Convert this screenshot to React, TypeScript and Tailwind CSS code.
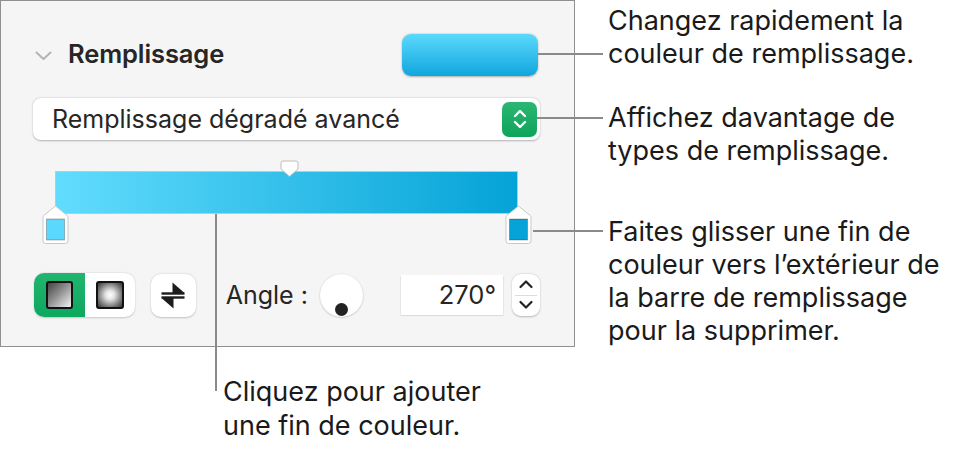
import React from "react";

const font = { fontFamily: "Inter, 'Liberation Sans', sans-serif" };

function ChevronDownSmall() {
  return (
    <svg width="17" height="10" viewBox="0 0 17 10" fill="none">
      <path d="M1.5 1.5 L8.5 8 L15.5 1.5" stroke="#b4b4b4" strokeWidth="2" strokeLinecap="round" strokeLinejoin="round" />
    </svg>
  );
}

function UpDownWhite() {
  return (
    <svg width="16" height="24" viewBox="0 0 16 24" fill="none">
      <path d="M3 9 L8 4 L13 9" stroke="white" strokeWidth="2.4" strokeLinecap="round" strokeLinejoin="round" />
      <path d="M3 15 L8 20 L13 15" stroke="white" strokeWidth="2.4" strokeLinecap="round" strokeLinejoin="round" />
    </svg>
  );
}

function SwapIcon() {
  return (
    <svg width="24" height="27" viewBox="0 0 24 27" fill="#1c1c1c">
      <path d="M11.5 0.5 L23.5 11 L11.5 11 Z" />
      <rect x="0.5" y="10.3" width="23" height="2.4" />
      <rect x="0.5" y="14.3" width="23" height="2.4" />
      <path d="M12.5 26.5 L0.5 16 L12.5 16 Z" />
    </svg>
  );
}

function StopMarker({ color }: { color: string }) {
  return (
    <svg width="27" height="40" viewBox="0 0 27 40">
      <path
        d="M13.5 1 L25.2 10.5 Q26 11.2 26 12.5 V36 Q26 38.5 23.5 38.5 H3.5 Q1 38.5 1 36 V12.5 Q1 11.2 1.8 10.5 Z"
        fill="white"
        stroke="#c9c9c9"
        strokeWidth="1"
      />
      <rect x="4.5" y="14" width="18" height="21" fill={color} stroke="rgba(0,0,0,0.25)" strokeWidth="1" />
    </svg>
  );
}

function MidHandle() {
  return (
    <svg width="19" height="18" viewBox="0 0 19 18">
      <path d="M1 3 Q1 1 3 1 H16 Q18 1 18 3 V9 L9.5 16.5 L1 9 Z" fill="white" stroke="#bdbdbd" strokeWidth="1" />
    </svg>
  );
}

function StepperChevrons() {
  return (
    <svg width="28" height="42" viewBox="0 0 28 42" fill="none">
      <path d="M8.5 13 L14 7.5 L19.5 13" stroke="#222" strokeWidth="2.2" strokeLinecap="round" strokeLinejoin="round" />
      <path d="M8.5 28 L14 33.5 L19.5 28" stroke="#222" strokeWidth="2.2" strokeLinecap="round" strokeLinejoin="round" />
    </svg>
  );
}

function Panel() {
  return (
    <div className="w-[575px] h-[347px] shrink-0 border border-[#8f8f8f] bg-[#f5f5f5] pl-[32px] pr-[34px] pt-[33px]">
      {/* Header */}
      <div className="flex items-center h-[42px]">
        <div className="w-[35px] flex items-center pl-[2px] pt-[1px]">
          <ChevronDownSmall />
        </div>
        <div className="text-[25.5px] leading-[30px] font-semibold text-[#262626] tracking-[-0.1px] -mt-[2px]">Remplissage</div>
        <div className="ml-auto mr-[2px] w-[136px] h-[42px] rounded-[9px] bg-[linear-gradient(to_bottom,#5bd9fd,#11a6dd)] shadow-[0_0.5px_2px_rgba(0,0,0,0.3)]" />
      </div>

      {/* Dropdown */}
      <div className="mt-[22px] h-[42px] w-[507px] rounded-[8px] bg-white shadow-[0_0.5px_2px_rgba(0,0,0,0.28)] flex items-center pl-[19px] pr-[3px]">
        <div className="text-[25px] leading-[30px] text-[#262626]">Remplissage dégradé avancé</div>
        <div className="ml-auto w-[35px] h-[35px] rounded-[7px] bg-[linear-gradient(to_bottom,#2bb674,#0ea35a)] flex items-center justify-center">
          <UpDownWhite />
        </div>
      </div>

      {/* Gradient bar */}
      <div className="relative mt-[31px] mx-[22px] h-[43px] border-[1.5px] border-[#c6c6c6] bg-[linear-gradient(to_right,#62dcfd,#05a3d7)]">
        <div className="absolute left-[224px] top-[-12px]">
          <MidHandle />
        </div>
        <div className="absolute left-[-14px] top-[33px]">
          <StopMarker color="#5ad8fd" />
        </div>
        <div className="absolute right-[-15px] top-[33px]">
          <StopMarker color="#05a3d8" />
        </div>
      </div>

      {/* Bottom row */}
      <div className="mt-[59px] flex items-center">
        <div className="flex h-[44px] w-[101px] ml-[1px] rounded-[10px] overflow-hidden bg-white shadow-[0_0.5px_2px_rgba(0,0,0,0.2)]">
          <div className="w-[51px] h-full bg-[linear-gradient(to_bottom,#22b470,#0ea85f)] flex items-center justify-center">
            <div className="w-[27px] h-[28px] border-[2.5px] border-[#111] rounded-[3px] bg-[linear-gradient(135deg,#444,#8d8d8d_45%,#f4f4f4)]" />
          </div>
          <div className="flex-1 flex items-center justify-center">
            <div className="w-[28px] h-[28px] border-[2.5px] border-[#111] rounded-[3px] bg-[radial-gradient(circle,#ffffff_0%,#e6e6e6_25%,#777_70%,#333_100%)]" />
          </div>
        </div>
        <div className="ml-[16px] w-[45px] h-[43px] rounded-[10px] bg-white shadow-[0_0.5px_2px_rgba(0,0,0,0.22)] flex items-center justify-center">
          <SwapIcon />
        </div>
        <div className="ml-[30px] w-[95px] text-[25px] leading-[30px] text-[#262626] whitespace-nowrap">Angle :</div>
        <div className="relative w-[43px] h-[43px] rounded-full bg-white shadow-[0_0.5px_2px_rgba(0,0,0,0.25)]">
          <div className="absolute left-[15px] top-[29px] w-[13px] h-[13px] rounded-full bg-[#222]" />
        </div>
        <div className="ml-[38px] w-[102px] h-[40px] bg-white shadow-[0_0.5px_1.5px_rgba(0,0,0,0.28)] flex items-center justify-end pr-[7px] text-[25.5px] text-[#262626]">
          270°
        </div>
        <div className="ml-[9px] w-[28px] h-[42px] rounded-[9px] bg-white shadow-[0_0.5px_2px_rgba(0,0,0,0.25)] relative">
          <div className="absolute left-[3px] right-[3px] top-[20.5px] h-px bg-[#dcdcdc]" />
          <div className="absolute inset-0">
            <StepperChevrons />
          </div>
        </div>
      </div>
    </div>
  );
}

export default function App() {
  return (
    <div className="relative w-[955px] h-[452px] bg-white overflow-hidden" style={font}>
      <div className="flex h-[347px] items-start">
        <Panel />
        <div className="ml-[33px] text-[27px] leading-[33px] text-[#1a1a1a] whitespace-nowrap">
          <div className="mt-[4px]">
            Changez rapidement la
            <br />
            couleur de remplissage.
          </div>
          <div className="mt-[31px]">
            Affichez davantage de
            <br />
            types de remplissage.
          </div>
          <div className="mt-[48px]">
            Faites glisser une fin de
            <br />
            couleur vers l’extérieur de
            <br />
            la barre de remplissage
            <br />
            pour la supprimer.
          </div>
        </div>
      </div>
      <div className="ml-[223px] mt-[28px] text-[27px] leading-[34px] text-[#1a1a1a] whitespace-nowrap">
        Cliquez pour ajouter
        <br />
        une fin de couleur.
      </div>

      {/* leader lines */}
      <div className="absolute left-[538px] top-[53px] w-[65px] h-[2px] bg-[#8a8a8a]" />
      <div className="absolute left-[537px] top-[117px] w-[66px] h-[2px] bg-[#8a8a8a]" />
      <div className="absolute left-[533px] top-[230px] w-[70px] h-[2px] bg-[#8a8a8a]" />
      <div className="absolute left-[215px] top-[214px] w-[2px] h-[177px] bg-[#8a8a8a]" />
    </div>
  );
}
